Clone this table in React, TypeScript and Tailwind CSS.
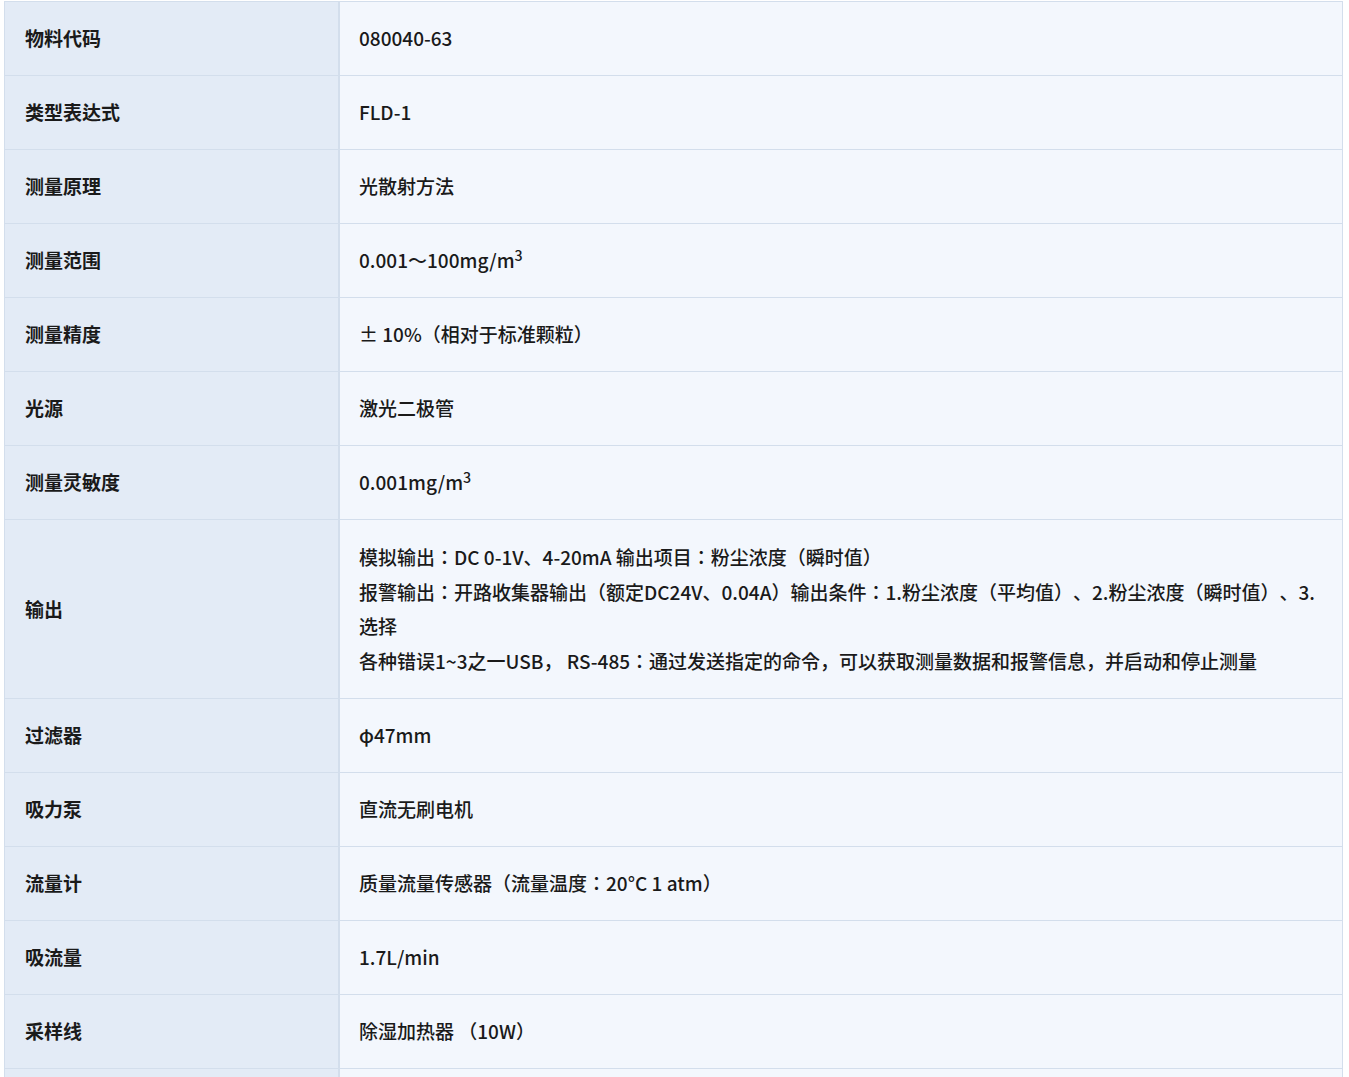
const ROWS: { label: string; value: React.ReactNode; multi?: boolean }[] = [
  { label: "物料代码", value: "080040-63" },
  { label: "类型表达式", value: "FLD-1" },
  { label: "测量原理", value: "光散射方法" },
  {
    label: "测量范围",
    value: (
      <>
        0.001～100mg/m<sup>3</sup>
      </>
    ),
  },
  { label: "测量精度", value: "± 10%（相对于标准颗粒）" },
  { label: "光源", value: "激光二极管" },
  {
    label: "测量灵敏度",
    value: (
      <>
        0.001mg/m<sup>3</sup>
      </>
    ),
  },
  {
    label: "输出",
    multi: true,
    value: (
      <>
        模拟输出：DC 0-1V、4-20mA 输出项目：粉尘浓度（瞬时值）
        <br />
        报警输出：开路收集器输出（额定DC24V、0.04A）输出条件：1.粉尘浓度（平均值）、2.粉尘浓度（瞬时值）、3.
        <br />
        选择
        <br />
        各种错误1~3之一USB， RS-485：通过发送指定的命令，可以获取测量数据和报警信息，并启动和停止测量
      </>
    ),
  },
  { label: "过滤器", value: "φ47mm" },
  { label: "吸力泵", value: "直流无刷电机" },
  { label: "流量计", value: "质量流量传感器（流量温度：20°C 1 atm）" },
  { label: "吸流量", value: "1.7L/min" },
  { label: "采样线", value: "除湿加热器 （10W）" },
  { label: "", value: "" },
];

export default function App() {
  return (
    <div
      className="min-h-screen bg-white pl-[4px] pt-[1px] text-[19px] text-[#1a1a1a] [text-spacing-trim:space-all]"
      style={{ fontFamily: '"Noto Sans CJK JP", "Noto Sans CJK SC", sans-serif' }}
    >
      <div className="w-[1339px] border-l border-r border-t border-[#d3deec]">
        {ROWS.map((row, i) => (
          <div
            key={i}
            className="grid grid-cols-[335px_1fr] border-b border-[#d3deec]"
          >
            <div className="flex min-h-[73px] items-center border-r-2 border-[#d3deec] bg-[#e3ebf6] px-5 font-bold">
              {row.label}
            </div>
            <div
              className={
                row.multi
                  ? "bg-[#f3f7fd] py-[20px] pl-[19px] pr-5 font-medium leading-[34.5px]"
                  : "flex h-[73px] items-center bg-[#f3f7fd] pl-[19px] pr-5 font-medium"
              }
            >
              <div>{row.value}</div>
            </div>
          </div>
        ))}
      </div>
    </div>
  );
}
